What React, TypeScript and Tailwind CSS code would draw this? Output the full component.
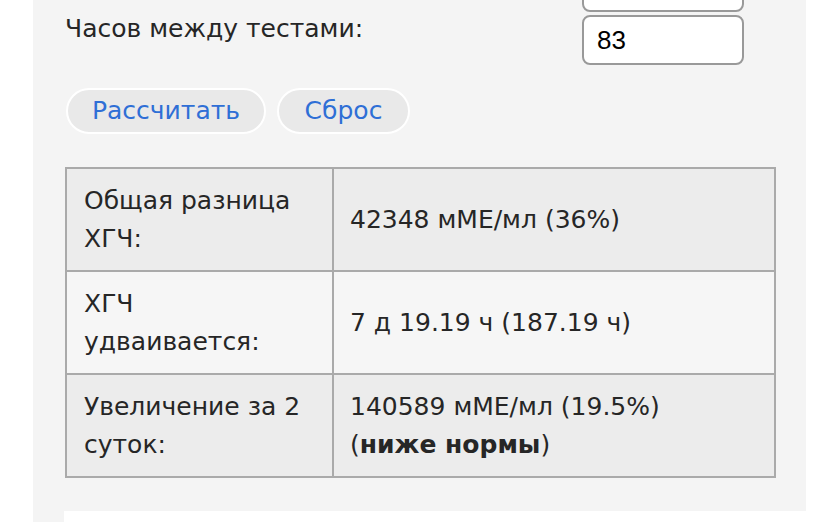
const font = { fontFamily: '"DejaVu Sans", Verdana, sans-serif' };

const rows = [
  { label: "Общая разница ХГЧ:", value: <>42348 мМЕ/мл (36%)</>, bg: "bg-[#ececec]" },
  { label: "ХГЧ удваивается:", value: <>7 д 19.19 ч (187.19 ч)</>, bg: "bg-[#f6f6f6]" },
  {
    label: "Увеличение за 2 суток:",
    value: (
      <>
        140589 мМЕ/мл (19.5%){" "}
        <span className="whitespace-nowrap">
          (<b className="font-bold">ниже нормы</b>)
        </span>
      </>
    ),
    bg: "bg-[#ececec]",
  },
];

export default function App() {
  return (
    <div className="h-[522px] w-[840px] overflow-hidden bg-white text-[#262626]" style={font}>
      <div className="ml-[33px] mt-[-30px] w-[773px] bg-[#f4f4f4] pb-[14px]">
        <div className="flex justify-end pr-[62px]">
          <div className="h-[42px] w-[162px] rounded-lg border-2 border-[#999] bg-white" />
        </div>
        <div className="mt-[3px] flex items-start justify-between pl-[32px] pr-[62px]">
          <span className="mt-[-3px] text-[25px] leading-[34px]">Часов между тестами:</span>
          <div className="flex h-[50px] w-[162px] items-center rounded-lg border-2 border-[#999] bg-white pl-[13px] text-[26px] text-black" style={{ fontFamily: '"Liberation Sans", sans-serif' }}>
            83
          </div>
        </div>
        <div className="mt-[23px] flex gap-[11px] pl-[33px]">
          <button className="h-[46px] w-[200px] rounded-full border-2 border-white bg-[#e9e9e9] text-[25px] text-[#2f6fd6]">
            Рассчитать
          </button>
          <button className="h-[46px] w-[133px] rounded-full border-2 border-white bg-[#e9e9e9] text-[25px] text-[#2f6fd6]">
            Сброс
          </button>
        </div>
        <table className="ml-[32px] mt-[33px] w-[711px] border-collapse text-[25px] leading-[38px]">
          <tbody>
            {rows.map((r, i) => (
              <tr key={i} className={`h-[103px] ${r.bg}`}>
                <td className="w-[267px] border-2 border-[#aaa] px-[17px] align-middle">{r.label}</td>
                <td className="border-2 border-[#aaa] pl-[16px] pr-[17px] align-middle">{r.value}</td>
              </tr>
            ))}
          </tbody>
        </table>
        <div className="mt-[33px] ml-[31px] h-[40px] w-[760px] bg-white" />
      </div>
    </div>
  );
}
